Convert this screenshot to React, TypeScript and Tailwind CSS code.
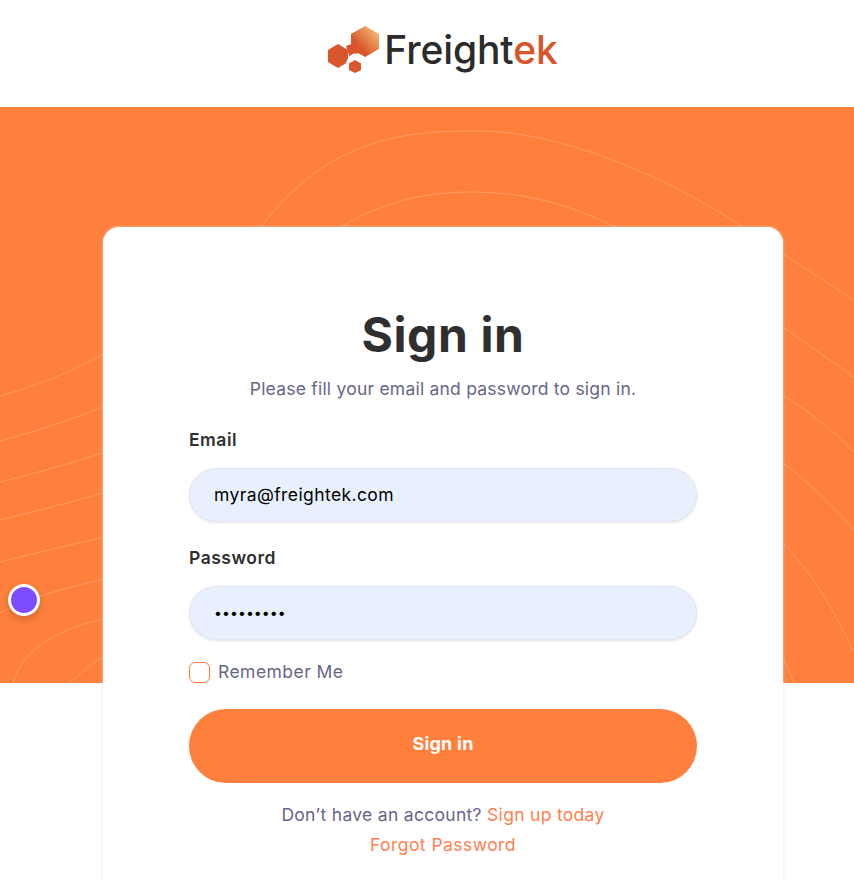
const lines = [
  'M261 227C330 135 410 131 479 131C570 131 683 187 743 227C783 254 820 278 854 300',
  'M341 227C385 200 430 192 471 192C525 192 572 205 615 227C672 257 728 288 783 327C808 345 832 361 854 377',
  'M0 396C40 385 75 370 103 354',
  'M0 441C40 430 75 418 103 407',
  'M0 482C40 472 75 462 103 453',
  'M0 520C40 510 75 501 103 493',
  'M0 562C40 552 75 544 103 537',
  'M0 613C30 597 60 590 103 579',
  'M13 683C22 650 55 630 103 619',
  'M70 683C78 675 90 664 103 657',
  'M783 395C810 412 835 432 854 452',
  'M783 463C810 484 835 507 854 530',
  'M783 543C815 577 835 612 854 653',
  'M783 657L794 683',
];

function Logo() {
  return (
    <div className="flex items-center">
      <svg width="52" height="47" viewBox="0 0 52 47" className="mr-1">
        <defs>
          <linearGradient id="hex" x1="0" y1="1" x2="1" y2="0">
            <stop offset="0.3" stopColor="#d9552b" />
            <stop offset="1" stopColor="#f8cb7e" />
          </linearGradient>
        </defs>
        <path d="M18 20L26 17L30 27L22 32Z" fill="#d9552b" />
        <path d="M37 0L51 8V23L37 31L23 23V8Z" fill="url(#hex)" />
        <path d="M10 18L20 24V36L10 42L0 36V24Z" fill="#d9552b" />
        <path d="M27 34L33 37.5V44L27 47L21 44V37.5Z" fill="#d9552b" />
        <path d="M19 37C21 32 24 28.5 27 28.5C30 28.5 32 31 36 31" stroke="#fff" strokeWidth="2" fill="none" />
      </svg>
      <span className="text-[39px] leading-none font-medium tracking-[-0.1px] text-[#2b2b2b]">
        Freight<span className="text-[#d9552b]">ek</span>
      </span>
    </div>
  );
}

export default function App() {
  return (
    <div className="relative h-[880px] w-[854px] overflow-hidden">
      <div className="w-[886px] bg-white font-['Inter',sans-serif] text-[17.5px] tracking-[0.22px]">
        <header className="flex h-[107px] items-center justify-center pb-[8px]">
          <Logo />
        </header>

        <div className="relative h-[576px] overflow-hidden bg-[#ff803c]">
          <svg className="absolute inset-0" width="854" height="576" viewBox="0 107 854 576" fill="none">
            {lines.map((d) => (
              <path key={d} d={d} stroke="#fff" strokeOpacity="0.22" strokeWidth="1" />
            ))}
          </svg>
        </div>

        <div className="absolute left-2 top-[584px] h-8 w-8 rounded-full border-[3px] border-white bg-[#7c4dff] shadow-[0_3px_8px_rgba(0,0,0,0.2)]" />

        <main className="relative mx-auto -mt-[456px] w-[680px] rounded-t-2xl bg-white px-[86px] pb-[40px] pt-[80px] shadow-[0_0_3px_rgba(220,220,220,0.9)]">
          <h1 className="text-center text-[48px] font-bold leading-[56px] tracking-[0.6px] text-[#2f2f2f]">Sign in</h1>
          <p className="mt-[14px] text-center leading-6 text-[#66668a]">Please fill your email and password to sign in.</p>

          <label className="mt-[27px] block font-semibold leading-6 tracking-[0.5px] text-[#2f2f2f]">Email</label>
          <input
            readOnly
            value="myra@freightek.com"
            className="mt-[16px] block h-[54px] w-full rounded-full border border-[#e3e6ee] bg-[#e8f0fe] px-6 pb-[2px] tracking-[0.4px] text-black shadow-[0_1px_3px_rgba(0,0,0,0.1)] outline-none"
          />

          <label className="mt-[24px] block font-semibold leading-6 tracking-[0.5px] text-[#2f2f2f]">Password</label>
          <input
            readOnly
            type="password"
            value="123456789"
            className="mt-[16px] block h-[54px] w-full rounded-full border border-[#e3e6ee] bg-[#e8f0fe] px-6 pb-[2px] text-[14px] tracking-[0.1px] text-black shadow-[0_1px_3px_rgba(0,0,0,0.1)] outline-none"
          />

          <div className="mt-[20px] flex items-center gap-2">
            <span className="h-[21px] w-[21px] rounded-md border border-[#ff803c] bg-white" />
            <span className="leading-6 tracking-[0.45px] text-[#66668a]">Remember Me</span>
          </div>

          <button className="mt-[25px] block h-[74px] w-full rounded-full bg-[#ff803c] pb-[6px] text-[18px] font-bold text-white">Sign in</button>

          <p className="mt-[17px] text-center leading-[30px] tracking-[0.3px] text-[#66668a]">
            Don’t have an account? <span className="text-[#ff7f50]">Sign up today</span>
          </p>
          <p className="text-center leading-[30px] tracking-[0.45px] text-[#ff7f50]">Forgot Password</p>
        </main>
      </div>
    </div>
  );
}
